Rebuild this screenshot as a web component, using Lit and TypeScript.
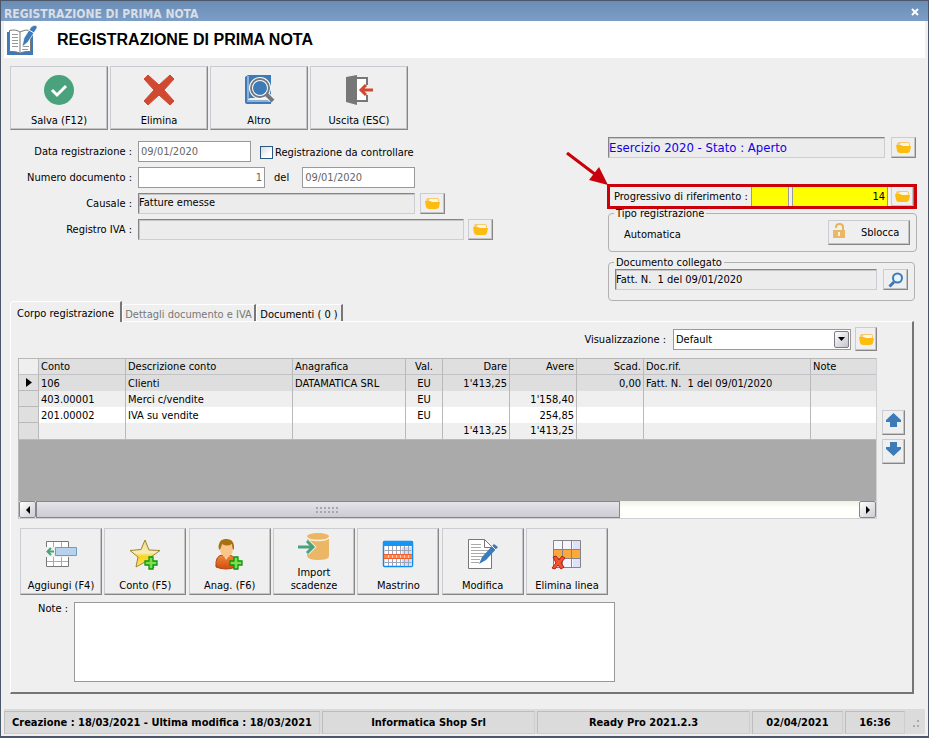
import { LitElement, html, css, svg } from "lit";
import { customElement, state } from "lit/decorators.js";
import { classMap } from "lit/directives/class-map.js";

const folder = html`<svg width="15" height="13" viewBox="0 0 15 13" aria-hidden="true">
  <path d="M1 6V3Q1 1 3 1H12Q14 1 14 3V6Z" fill="#f9c873"/>
  <path d="M5 2H12Q13 2 13 3V5H3L4 3Z" fill="#fff6e2"/>
  <path d="M0 4H5L7 5H15L14 10Q13.500 12 11 12H4Q1.500 12 1 10Z" fill="#fdbd10"/>
</svg>`;

const plus = svg`<path d="M20 19h4v4h4v4h-4v4h-4v-4h-4v-4h4z" fill="#7be04a" stroke="#0c9410" stroke-width="1.3"/>`;

const icons: Record<string, unknown> = {
  save: html`<svg width="32" height="32" viewBox="0 0 32 32"><circle cx="16" cy="16" r="15" fill="#4aa27c"/><path d="M9 16l5 5 9-9" fill="none" stroke="#fff" stroke-width="3"/></svg>`,
  remove: html`<svg width="32" height="32" viewBox="0 0 32 32"><path d="M1 5L5 1 16 11 27 1 31 5 21 16 31 27 27 31 16 21 5 31 1 27 11 16Z" fill="#cf4a30" stroke="#cf4a30"/></svg>`,
  other: html`<svg width="32" height="32" viewBox="0 0 32 32">
    <path d="M2 3L5 1H28V24H7L4 26H28V30H4Q2 30 2 28Z" fill="#3d7ab8"/><path d="M5 2V25M4 27H26" stroke="#dfe9f4" fill="none"/>
    <circle cx="17" cy="14" r="9" fill="#3d7ab8" stroke="#fff" stroke-width="4"/><path d="M22 19L29 26" stroke="#fff" stroke-width="6"/>
    <circle cx="17" cy="14" r="9" fill="none" stroke="#74777b" stroke-width="2"/><path d="M23 20L30 27" stroke="#74777b" stroke-width="4"/></svg>`,
  exit: html`<svg width="32" height="32" viewBox="0 0 32 32"><path d="M3 3L14 1V31L3 28Z" fill="#777"/><path d="M14 4H24V27H14Z" fill="#fff"/><path d="M14 4H24V11M24 21V27H14" fill="none" stroke="#777" stroke-width="2"/><path d="M24 11V21" stroke="#efefef" stroke-width="3"/><path d="M30 16H18M23 11L18 16L23 21" fill="none" stroke="#cf4a30" stroke-width="3"/></svg>`,
  add: html`<svg width="32" height="32" viewBox="0 0 32 32"><path d="M2 4H24V29H2Z" fill="#fff"/><path d="M1.500 9V3.500H23.500V9M1.500 19V28.500H23.500V19" fill="none" stroke="#777"/><path d="M8.500 4V9M16.500 4V9M8.500 19V28M16.500 19V28M2 23.500H23" fill="none" stroke="#aaa"/><path d="M0 9H32V19H0Z" fill="#efefef"/><path d="M10.500 9.500H31.500V17.500H10.500Z" fill="#b7d3eb" stroke="#6d9cc5"/><path d="M9 13.500H2M6 10L2.500 13.500L6 17" fill="none" stroke="#4aa27c" stroke-width="2"/></svg>`,
  account: html`<svg width="32" height="32" viewBox="0 0 32 32"><defs><linearGradient id="gold" x1="0" y1="0" x2="0" y2="1"><stop offset="0" stop-color="#f0d98c"/><stop offset=".45" stop-color="#f8edb4"/><stop offset=".6" stop-color="#fad21c"/><stop offset="1" stop-color="#ffe98a"/></linearGradient></defs><path d="M16 2L20 12 31 12.500 22 19 25 30 16 24 7 29 9 19 1 12.500 12 11.500Z" fill="url(#gold)" stroke="#9d8430"/>${plus}</svg>`,
  person: html`<svg width="32" height="32" viewBox="0 0 32 32"><defs><linearGradient id="coat" x1="0" y1="0" x2="0" y2="1"><stop offset="0" stop-color="#ef8a32"/><stop offset="1" stop-color="#d14a14"/></linearGradient></defs><path d="M2 29Q1 17 9 17H15Q23 18 22 29Q12 33 2 29Z" fill="url(#coat)" stroke="#a8480f"/><path d="M9 16L12 22L16 16Z" fill="#fbd3a0"/><ellipse cx="12.500" cy="11" rx="6.500" ry="8" fill="#fac58b"/><path d="M5 12Q3 2 11 1Q21 0 20 12Q18 11 18 6Q13 9 8 6Q7 11 5 12Z" fill="#a8700f"/>${plus}</svg>`,
  import: html`<svg width="32" height="32" viewBox="0 0 32 32"><path d="M9 6V25Q10 29 20 29Q31 29 31 25V6Z" fill="#ebb765"/><ellipse cx="20" cy="6" rx="11" ry="3.500" fill="#ebb765"/><path d="M9 6Q10 9.500 20 9.500T31 6" fill="none" stroke="#fbeeda" stroke-width="1.500"/><ellipse cx="20" cy="5" rx="11" ry="3" fill="#ebb765"/><path d="M0 16H14M9 10L15 16L9 22" fill="none" stroke="#efefef" stroke-width="5"/><path d="M0 16H14M9 10L15 16L9 22" fill="none" stroke="#4aa27c" stroke-width="3"/></svg>`,
  ledger: html`<svg width="32" height="32" viewBox="0 0 32 32"><rect x="1.500" y="3.500" width="29" height="25" rx="1" fill="#fff" stroke="#0d8df0" stroke-width="1.500"/><path d="M1 3H31V8H1Z" fill="#1595f5"/><path d="M20 9H30V28H20Z" fill="#d5dbfa"/><path d="M2.500 12.500H29.500M2.500 24.500H29.500M6.500 8V28M10.500 8V28M14.500 8V28M18.500 8V28M22.500 8V28M26.500 8V28" stroke="#9da4b7" fill="none"/><path d="M2 16H30V21H2Z" fill="#ff8344"/><path d="M2 16.500H30M2 20.500H30" stroke="#ed602d"/><path d="M6.500 17V20M10.500 17V20M14.500 17V20M18.500 17V20M22.500 17V20M26.500 17V20" stroke="#ffd0b8"/></svg>`,
  edit: html`<svg width="32" height="32" viewBox="0 0 32 32"><path d="M1.500 1.500H17.500L24.500 8.500V30.500H1.500Z" fill="#fff" stroke="#777"/><path d="M17.500 1.500V9.500H24.500" fill="none" stroke="#777"/><path d="M4 6.500H14M4 9.500H14M4 12.500H22M4 15.500H20M4 18.500H18M4 21.500H13M4 24.500H12" stroke="#aaa"/><path d="M12 26L15 19L27 6L31 9L19 22Z" fill="#3d7ab8"/><path d="M25 8L29 12" stroke="#fff"/></svg>`,
  deleteRow: html`<svg width="32" height="32" viewBox="0 0 32 32"><path d="M3 2H30V29H3Z" fill="#f5f5ff"/><path d="M22 2H30V29H22Z" fill="#dfe1fa"/><path d="M3 11H30V20H3Z" fill="#fba83c"/><path d="M2.500 2.500H29.500V29.500H2.500ZM3 11.500H30M3 20.500H30M11.500 2V29M20.500 2V29" fill="none" stroke="#858585"/><path d="M2 19L5 18 8 22 11 18 14 20 10 25 13 29 10 31 7 27 4 31 1 30 5 25Z" fill="#f3542c" stroke="#b71e11"/></svg>`,
};

interface Action { label: string; icon: string; }

const mainActions: Action[] = [
  { label: "Salva (F12)", icon: "save" },
  { label: "Elimina", icon: "remove" },
  { label: "Altro", icon: "other" },
  { label: "Uscita (ESC)", icon: "exit" },
];

const rowActions: Action[] = [
  { label: "Aggiungi (F4)", icon: "add" },
  { label: "Conto (F5)", icon: "account" },
  { label: "Anag. (F6)", icon: "person" },
  { label: "Import scadenze", icon: "import" },
  { label: "Mastrino", icon: "ledger" },
  { label: "Modifica", icon: "edit" },
  { label: "Elimina linea", icon: "deleteRow" },
];

const columns = [
  { title: "Conto", align: "left", size: "c-account" },
  { title: "Descrizione conto", align: "left", size: "c-wide" },
  { title: "Anagrafica", align: "left", size: "c-name" },
  { title: "Val.", align: "center", size: "c-cur" },
  { title: "Dare", align: "right", size: "c-num" },
  { title: "Avere", align: "right", size: "c-num" },
  { title: "Scad.", align: "right", size: "c-num" },
  { title: "Doc.rif.", align: "left", size: "c-wide" },
  { title: "Note", align: "left", size: "c-rest" },
];

const rows = [
  ["106", "Clienti", "DATAMATICA SRL", "EU", "1'413,25", "", "0,00", "Fatt. N.  1 del 09/01/2020", ""],
  ["403.00001", "Merci c/vendite", "", "EU", "", "1'158,40", "", "", ""],
  ["201.00002", "IVA su vendite", "", "EU", "", "254,85", "", "", ""],
  ["", "", "", "", "1'413,25", "1'413,25", "", "", ""],
];

const tabs = [
  { label: "Corpo registrazione", disabled: false },
  { label: "Dettagli documento e IVA", disabled: true },
  { label: "Documenti ( 0 )", disabled: false },
];

@customElement("app-root")
export class AppRoot extends LitElement {
  @state() private tab = 0;
  @state() private selected = 0;

  static styles = css`
    * { box-sizing: border-box; }
    :host {
      display: flex; flex-direction: column; min-height: 100vh; box-sizing: border-box;
      border: 1px solid #4b5768; border-bottom-width: 2px;
      background: #efefef; color: #000;
      font: 11px/14px "DejaVu Sans Condensed", "DejaVu Sans", sans-serif;
    }
    button, input, select, textarea { font: inherit; color: inherit; margin: 0; border-radius: 0; }
    svg { display: block; flex: none; }
    .titlebar {
      display: flex; justify-content: space-between; align-items: center; height: 20px;
      padding: 5px 7px 0 3px; background: linear-gradient(#6a8db6, #7c9ec6); color: #d9dee6;
      font-size: 12px; font-weight: bold;
    }
    .close { display: flex; align-items: center; justify-content: center; width: 12px; height: 12px; border: 0; padding: 0 0 4px; background: none; }
    .heading { display: flex; align-items: center; gap: 20px; height: 37px; margin: 0 3px; padding: 0 3px; background: #fff; }
    h1 { margin: 0; font: bold 16px/20px "Liberation Sans", Arial, sans-serif; }
    main { flex: 1; padding: 8px 11px 15px 9px; }

    .btn {
      display: flex; align-items: center; justify-content: center; padding: 0;
      border: 1px solid; border-color: #cbcbd2 #868686 #868686 #cbcbd2;
      box-shadow: inset -1px -1px #c4c4c4; background: #efefef;
    }
    .small { width: 25px; height: 21px; flex: none; }
    .big { flex-direction: column; justify-content: space-between; line-height: 13px; }
    .toolbar { display: flex; gap: 2px; }
    .toolbar .big { width: 98px; height: 64px; padding: 7px 4px 2px; }
    .actions { display: flex; justify-content: space-between; width: 588px; margin: 9px 0 0 2px; }
    .actions .big { width: 82px; height: 67px; padding: 9px 8px 2px; white-space: nowrap; }
    .actions .two { padding-top: 2px; white-space: normal; }

    .form { display: flex; justify-content: space-between; gap: 16px; margin-top: 7px; height: 164px; }
    .left { display: flex; flex-direction: column; gap: 5px; padding-top: 4px; flex: 1; min-width: 0; }
    .row { display: flex; align-items: center; height: 21px; }
    .row > .lead { width: 122px; margin-right: 6px; text-align: right; flex: none; white-space: nowrap; }
    .field { height: 21px; border: 1px solid #999; background: #fff; padding: 0 2px; min-width: 0; color: #666; }
    .date { width: 113px; }
    .number { width: 127px; text-align: right; }
    .sunk { height: 21px; border: 1px solid; border-color: #858585 #cdcdd4 #cdcdd4 #858585; box-shadow: inset 1px 1px #c6c6c6; background: #ececec; padding: 0 1px 3px 0; min-width: 0; }
    .causale { width: 277px; margin-right: 5px; }
    .registro { width: 326px; margin-right: 4px; }
    .del { margin: 0 13px 0 9px; }
    .check { display: flex; align-items: center; gap: 2px; margin-left: 9px; padding-top: 2px; }
    .check input { appearance: none; width: 13px; height: 13px; border: 1px solid #2b5782; background: linear-gradient(135deg, #d9dad8, #fff 70%); }

    .right { width: 309px; flex: none; }
    .right .row { gap: 6px; padding-right: 1px; }
    .year { flex: 1; color: #1200e8; font-size: 13px; padding-bottom: 1px; }
    .callout { position: relative; z-index: 1; display: flex; align-items: center; gap: 3px; height: 25px; margin: 26px 0 0 -1px; padding-left: 4px; border: 3px solid #cc0008; background: #efefef; }
    .callout label { white-space: nowrap; flex: 1; }
    .yellow { height: 19px; background: #ff0; border: 0; border-left: 1px solid #999; border-right: 1px solid #999; padding: 0 2px; text-align: right; min-width: 0; }
    .series { width: 38px; }
    .prog { width: 96px; }
    .callout .btn { height: 19px; width: 23px; border-top: 0; border-bottom: 0; }
    .pointer { position: absolute; right: 100%; bottom: 100%; }
    fieldset { margin: 0; padding: 0 6px; border: 1px solid #b1b1b1; border-radius: 4px; min-width: 0; }
    .kind { margin-top: -3px; height: 46px; }
    .linked { margin: 3px 2px 0 0; height: 46px; }
    legend { padding: 1px 2px 0; margin-left: -1px; line-height: 13px; height: 14px; }
    .split { display: flex; align-items: center; justify-content: space-between; gap: 6px; }
    .auto { padding: 5px 0 0 9px; }
    .unlock { width: 82px; height: 25px; justify-content: flex-start; gap: 15px; padding: 0 0 3px 4px; }
    .unlock span { padding-top: 4px; }
    .doc { flex: 1; padding-bottom: 1px; }

    .tabs { display: flex; align-items: flex-end; height: 20px; }
    .tab { height: 17px; border: solid; border-width: 1px 2px 0 1px; border-color: #fff #777 #fff #fff; border-radius: 4px 0 0 0; background: #efefef; padding: 3px 0 0; white-space: nowrap; line-height: 13px; width: 87px; text-align: center; }
    .tab.active { height: 21px; margin-bottom: -1px; position: relative; padding: 3px 0 0; width: 112px; }
    .tab:disabled { color: #777; width: 134px; }
    .panel { display: flex; flex-direction: column; border: solid; border-width: 1px 2px 2px 1px; border-color: #fff #757575 #757575 #fff; padding: 5px 7px 10px 7px; margin-right: 3px; }
    .view { display: flex; align-items: center; justify-content: flex-end; gap: 4px; padding-right: 28px; }
    .combo { position: relative; width: 178px; }
    .combo select { appearance: none; display: block; width: 100%; height: 21px; border: 1px solid #999; background: #fff; padding: 1px 20px 0 2px; }
    .combo span { position: absolute; top: 2px; right: 2px; width: 15px; height: 17px; display: flex; align-items: center; justify-content: center; border: 1px solid #7c7c84; border-radius: 2px; background: linear-gradient(135deg, #fff, #c4c4cc); pointer-events: none; }
    .view label { margin-right: 3px; padding-top: 2px; }
    .view .small { height: 24px; width: 22px; }

    .gridwrap { display: flex; gap: 5px; margin-top: 7px; }
    .grid { flex: 1; min-width: 0; height: 161px; display: flex; flex-direction: column; border: 1px solid; border-color: #b8b8b8 #cfcfd4 #cfcfd4 #b8b8b8; background: #aaa; }
    table { table-layout: fixed; width: 100%; border-collapse: separate; border-spacing: 0; line-height: 15px; }
    th, td { height: 16px; padding: 0 2px; font-weight: normal; white-space: pre; overflow: hidden; border-right: 1px solid #b9b9b9; }
    th { background: #dfdfdf; border-bottom: 1px solid #c3c3c7; }
    th:last-child, td:last-child { border-right: 0; }
    td { background: #efefef; }
    tr:nth-child(3) td { background: #fff; }
    tr.current td { background: #dedede; }
    tbody tr td.mark { background: #dfdfdf; border-bottom: 1px solid #b9b9b9; }
    tbody tr:last-child td { height: 17px; line-height: 16px; border-bottom: 1px solid #b9b9b9; }
    .mark svg { margin: 0 auto; }
    thead th:first-child { background: #efefef; }
    .left-al { text-align: left; } .center { text-align: center; } .right-al { text-align: right; }
    .c-mark { width: 20px; } .c-account { width: 87px; } .c-wide { width: 167px; } .c-name { width: 113px; } .c-cur { width: 37px; } .c-num { width: 67px; }
    .scroll { display: flex; height: 17px; margin-top: auto; background: linear-gradient(#f0f0e8, #fffffb 40%); }
    .scroll button { width: 17px; flex: none; display: flex; align-items: center; justify-content: center; padding: 0; border: 1px solid #85858c; border-radius: 2px; background: linear-gradient(135deg, #fff, #ccccd2); }
    .track { flex: 1; display: flex; }
    .thumb { width: 71%; border: 1px solid #85858c; background: linear-gradient(#e4e4ea, #cbcbd1); display: flex; align-items: center; justify-content: center; }
    .movers { display: flex; flex-direction: column; gap: 4px; padding-top: 52px; }
    .movers .small { width: 23px; height: 25px; padding-bottom: 4px; }
    .notes { display: flex; gap: 6px; margin-top: 7px; }
    .notes label { width: 50px; text-align: right; }
    textarea { width: 541px; height: 80px; border: 1px solid #999; background: #fff; resize: none; }

    footer { display: flex; gap: 2px; height: 25px; margin: 0 3px 2px 3px; padding-top: 2px; background: #dbdbdb; font-weight: bold; white-space: nowrap; }
    footer span { display: flex; align-items: center; justify-content: center; border: 1px solid; border-color: #bdbdbd #cdcdd2 #cdcdd2 #bdbdbd; flex: none; }
    footer .made { width: 316px; } footer .cell { flex: 1 1 0; } footer .today { width: 91px; } footer .time { width: 60px; }
    footer svg { align-self: center; margin-right: 4px; }
  `;

  private bigButton(a: Action) {
    return html`<button class=${classMap({ btn: true, big: true, two: a.icon === "import" })} type="button">${icons[a.icon]}<span>${a.label}</span></button>`;
  }

  private folderButton(label: string) {
    return html`<button class="btn small" type="button" aria-label=${label}>${folder}</button>`;
  }

  private align(a: string) { return a === "center" ? "center" : `${a}-al`; }

  private renderForm() {
    return html`<div class="form">
      <div class="left">
        <div class="row">
          <label class="lead" for="date">Data registrazione :</label><input id="date" class="field date" value="09/01/2020">
          <label class="check"><input type="checkbox">Registrazione da controllare</label>
        </div>
        <div class="row">
          <label class="lead" for="num">Numero documento :</label><input id="num" class="field number" value="1">
          <label class="del" for="docdate">del</label><input id="docdate" class="field date" value="09/01/2020">
        </div>
        <div class="row"><label class="lead" for="cause">Causale :</label><input id="cause" class="sunk causale" readonly value="Fatture emesse">${this.folderButton("Scegli causale")}</div>
        <div class="row"><label class="lead" for="vat">Registro IVA :</label><input id="vat" class="sunk registro" readonly>${this.folderButton("Scegli registro IVA")}</div>
      </div>
      <div class="right">
        <div class="row"><input class="sunk year" readonly aria-label="Esercizio" value="Esercizio 2020 - Stato : Aperto">${this.folderButton("Scegli esercizio")}</div>
        <div class="callout">
          <label for="prog">Progressivo di riferimento :</label>
          <input class="yellow series" aria-label="Serie"><input id="prog" class="yellow prog" value="14">${this.folderButton("Scegli progressivo")}
          <svg class="pointer" width="46" height="38" viewBox="0 0 46 38"><path d="M3 4L36 29" stroke="#c9000b" stroke-width="3"/><path d="M44 36L25 31L35 18Z" fill="#c9000b"/></svg>
        </div>
        <fieldset class="kind"><legend>Tipo registrazione</legend>
          <div class="split"><span class="auto">Automatica</span>
            <button class="btn unlock" type="button"><svg width="13" height="16" viewBox="0 0 13 16"><path d="M3 5V4Q3 1 6.500 1T10 4V7" fill="none" stroke="#e8b35f" stroke-width="2"/><path d="M0 7H12V15H0Z" fill="#ebb765"/><path d="M6 9V13" stroke="#fff5de" stroke-width="2"/></svg><span>Sblocca</span></button></div>
        </fieldset>
        <fieldset class="linked"><legend>Documento collegato</legend>
          <div class="split"><input class="sunk doc" readonly aria-label="Documento collegato" value="Fatt. N.  1 del 09/01/2020">
            <button class="btn small" type="button" aria-label="Cerca documento"><svg width="16" height="16" viewBox="0 0 16 16"><circle cx="9.500" cy="6" r="4.500" fill="#e6f4fd" stroke="#3d7ab8" stroke-width="2"/><path d="M6 10L1.500 14.500" stroke="#3d7ab8" stroke-width="3"/></svg></button></div>
        </fieldset>
      </div>
    </div>`;
  }

  private renderGrid() {
    return html`<div class="gridwrap">
      <div class="grid">
        <table>
          <colgroup><col class="c-mark">${columns.map((c) => html`<col class=${c.size}>`)}</colgroup>
          <thead><tr><th></th>${columns.map((c) => html`<th class=${this.align(c.align)}>${c.title}</th>`)}</tr></thead>
          <tbody>${rows.map((r, i) => html`<tr class=${classMap({ current: i === this.selected })} @click=${() => (this.selected = i)}>
            <td class="mark">${i === this.selected ? html`<svg width="6" height="9" viewBox="0 0 6 9"><path d="M0 0L6 4.500L0 9Z"/></svg>` : ""}</td>
            ${r.map((v, j) => html`<td class=${this.align(columns[j].align)}>${v}</td>`)}</tr>`)}</tbody>
        </table>
        <div class="scroll">
          <button type="button" aria-label="Scorri a sinistra"><svg width="4" height="8" viewBox="0 0 4 8"><path d="M4 0L0 4L4 8Z"/></svg></button>
          <div class="track"><div class="thumb"><svg width="24" height="6" viewBox="0 0 24 6"><path d="M0 1H24M0 5H24" stroke="#a6a6ac" stroke-width="2" stroke-dasharray="2 2"/></svg></div></div>
          <button type="button" aria-label="Scorri a destra"><svg width="4" height="8" viewBox="0 0 4 8"><path d="M0 0L4 4L0 8Z"/></svg></button>
        </div>
      </div>
      <div class="movers">
        <button class="btn small" type="button" aria-label="Sposta su"><svg width="15" height="15" viewBox="0 0 15 15"><path d="M7.500 0L15 7V9H11V14H4V9H0V7Z" fill="#3d7ab8"/></svg></button>
        <button class="btn small" type="button" aria-label="Sposta giù"><svg width="15" height="15" viewBox="0 0 15 15"><path d="M4 0H11V5H15V7L7.500 14L0 7V5H4Z" fill="#3d7ab8"/></svg></button>
      </div>
    </div>`;
  }

  render() {
    return html`
      <div class="titlebar"><span>REGISTRAZIONE DI PRIMA NOTA</span>
        <button class="close" type="button" aria-label="Chiudi"><svg width="8" height="8" viewBox="0 0 8 8"><path d="M1 1L7 7M7 1L1 7" stroke="#fff" stroke-width="2"/></svg></button></div>
      <header class="heading">
        <svg width="30" height="32" viewBox="0 0 30 32"><path d="M0 8H26V31H0Z" fill="#3d7ab8"/><path d="M2.500 6.500Q9 5 13 8Q18 5 23.500 6.500V27.500Q17 27 13 29Q9 27 2.500 27.500Z" fill="#fff" stroke="#777"/><path d="M13 8V28" stroke="#777"/><path d="M5 10.500H11M5 13.500H11M5 16.500H11M5 19.500H11M5 22.500H11M15 22.500H22M15 25.500H21" stroke="#999"/><path d="M15 23L17 14L24 3Q27 0 30 2V4L21 18Z" fill="#3d7ab8" stroke="#fff" stroke-width=".7"/><path d="M22 6L27 9" stroke="#fff"/></svg>
        <h1>REGISTRAZIONE DI PRIMA NOTA</h1>
      </header>
      <main>
        <div class="toolbar">${mainActions.map((a) => this.bigButton(a))}</div>
        ${this.renderForm()}
        <div class="tabs" role="tablist">${tabs.map((t, i) => html`<button role="tab" type="button" class=${classMap({ tab: true, active: i === this.tab })} aria-selected=${i === this.tab} ?disabled=${t.disabled} @click=${() => (this.tab = i)}>${t.label}</button>`)}</div>
        <section class="panel">
          <div class="view"><label for="view">Visualizzazione :</label>
            <div class="combo"><select id="view"><option>Default</option></select><span><svg width="7" height="4" viewBox="0 0 7 4"><path d="M0 0H7L3.500 4Z"/></svg></span></div>
            ${this.folderButton("Gestisci visualizzazioni")}</div>
          ${this.renderGrid()}
          <div class="actions">${rowActions.map((a) => this.bigButton(a))}</div>
          <div class="notes"><label for="notes">Note :</label><textarea id="notes"></textarea></div>
        </section>
      </main>
      <footer><span class="made">Creazione : 18/03/2021 - Ultima modifica : 18/03/2021</span><span class="cell">Informatica Shop Srl</span><span class="cell">Ready Pro 2021.2.3</span><span class="today">02/04/2021</span><span class="time">16:36</span>
        <svg width="14" height="8" viewBox="0 0 14 8"><path d="M6 6h2v2H6zM10 6h2v2h-2zM10 1h2v2h-2z" fill="#aaa"/></svg></footer>
    `;
  }
}
